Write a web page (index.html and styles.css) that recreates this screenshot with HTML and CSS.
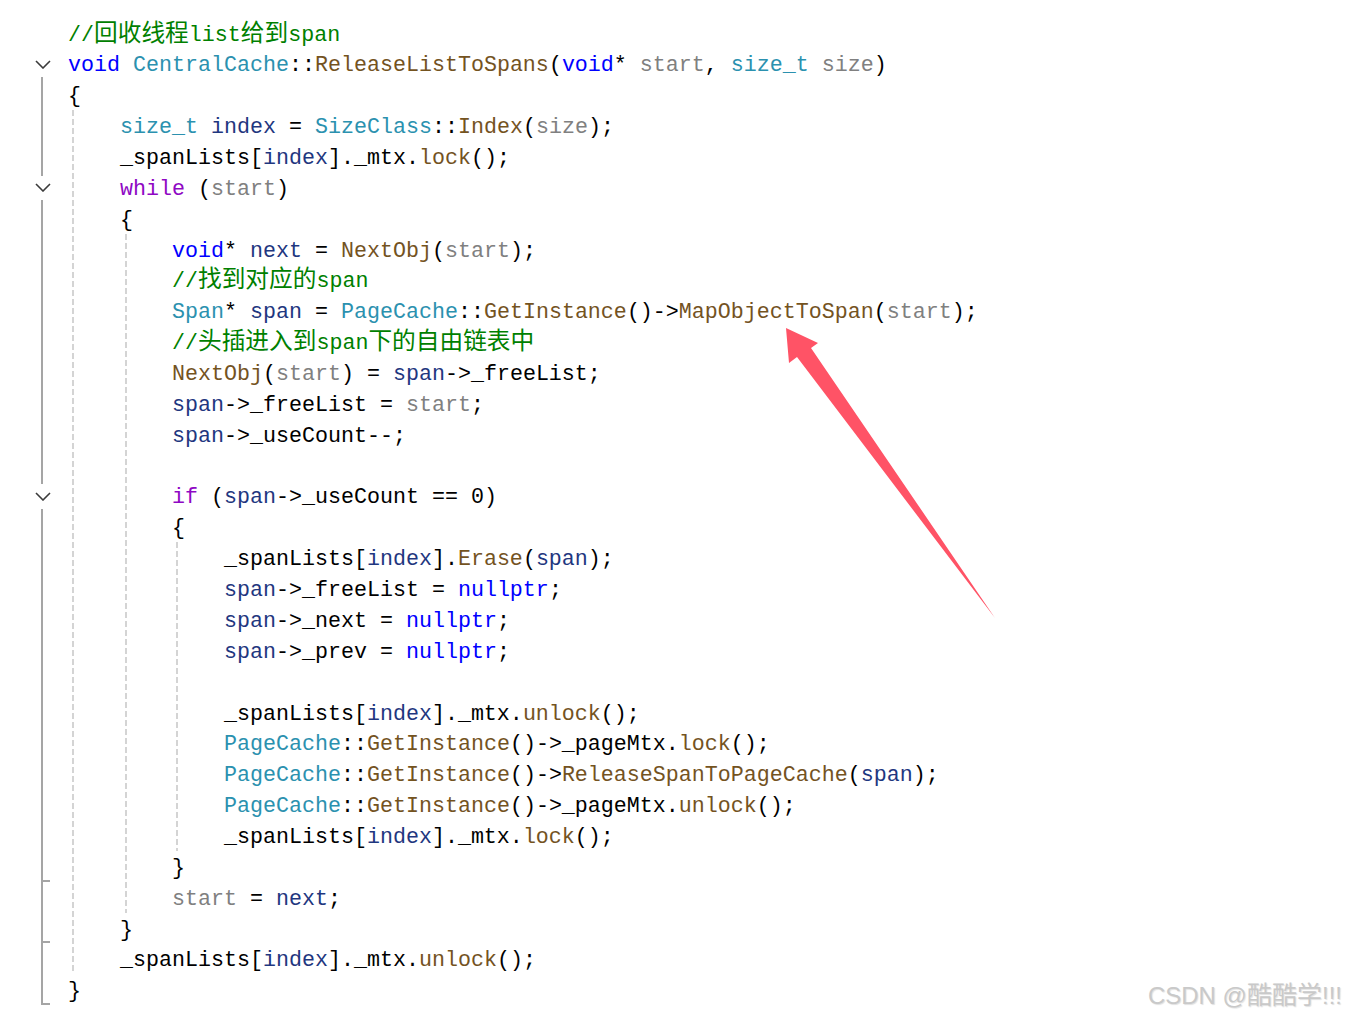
FILE: index.html
```html
<!DOCTYPE html>
<html lang="zh-CN">
<head>
<meta charset="utf-8">
<title>CentralCache::ReleaseListToSpans</title>
<link rel="stylesheet" href="styles.css">
</head>
<body>
<div class="page">
  <div class="editor">
    <div class="row"><div class="gut"></div><div class="code"><span class="m">//<span class="z">回收线程</span>list<span class="z">给到</span>span</span></div></div>
    <div class="row"><div class="gut fold first"><svg class="chev" viewBox="0 0 16 9"><polyline points="1,1 8,8 15,1"/></svg></div><div class="code"><span class="k">void</span> <span class="t">CentralCache</span>::<span class="f">ReleaseListToSpans</span>(<span class="k">void</span>* <span class="p">start</span>, <span class="t">size_t</span> <span class="p">size</span>)</div></div>
    <div class="row"><div class="gut bar"></div><div class="code">{</div></div>
    <div class="row"><div class="gut bar"></div><div class="code">    <span class="t">size_t</span> <span class="l">index</span> = <span class="t">SizeClass</span>::<span class="f">Index</span>(<span class="p">size</span>);</div></div>
    <div class="row"><div class="gut bar"></div><div class="code">    _spanLists[<span class="l">index</span>]._mtx.<span class="f">lock</span>();</div></div>
    <div class="row"><div class="gut fold"><svg class="chev" viewBox="0 0 16 9"><polyline points="1,1 8,8 15,1"/></svg></div><div class="code">    <span class="c">while</span> (<span class="p">start</span>)</div></div>
    <div class="row"><div class="gut bar"></div><div class="code">    {</div></div>
    <div class="row"><div class="gut bar"></div><div class="code">        <span class="k">void</span>* <span class="l">next</span> = <span class="f">NextObj</span>(<span class="p">start</span>);</div></div>
    <div class="row"><div class="gut bar"></div><div class="code">        <span class="m">//<span class="z">找到对应的</span>span</span></div></div>
    <div class="row"><div class="gut bar"></div><div class="code">        <span class="t">Span</span>* <span class="l">span</span> = <span class="t">PageCache</span>::<span class="f">GetInstance</span>()-&gt;<span class="f">MapObjectToSpan</span>(<span class="p">start</span>);</div></div>
    <div class="row"><div class="gut bar"></div><div class="code">        <span class="m">//<span class="z">头插进入到</span>span<span class="z">下的自由链表中</span></span></div></div>
    <div class="row"><div class="gut bar"></div><div class="code">        <span class="f">NextObj</span>(<span class="p">start</span>) = <span class="l">span</span>-&gt;_freeList;</div></div>
    <div class="row"><div class="gut bar"></div><div class="code">        <span class="l">span</span>-&gt;_freeList = <span class="p">start</span>;</div></div>
    <div class="row"><div class="gut bar"></div><div class="code">        <span class="l">span</span>-&gt;_useCount--;</div></div>
    <div class="row"><div class="gut bar"></div><div class="code"> </div></div>
    <div class="row"><div class="gut fold"><svg class="chev" viewBox="0 0 16 9"><polyline points="1,1 8,8 15,1"/></svg></div><div class="code">        <span class="c">if</span> (<span class="l">span</span>-&gt;_useCount == 0)</div></div>
    <div class="row"><div class="gut bar"></div><div class="code">        {</div></div>
    <div class="row"><div class="gut bar"></div><div class="code">            _spanLists[<span class="l">index</span>].<span class="f">Erase</span>(<span class="l">span</span>);</div></div>
    <div class="row"><div class="gut bar"></div><div class="code">            <span class="l">span</span>-&gt;_freeList = <span class="k">nullptr</span>;</div></div>
    <div class="row"><div class="gut bar"></div><div class="code">            <span class="l">span</span>-&gt;_next = <span class="k">nullptr</span>;</div></div>
    <div class="row"><div class="gut bar"></div><div class="code">            <span class="l">span</span>-&gt;_prev = <span class="k">nullptr</span>;</div></div>
    <div class="row"><div class="gut bar"></div><div class="code"> </div></div>
    <div class="row"><div class="gut bar"></div><div class="code">            _spanLists[<span class="l">index</span>]._mtx.<span class="f">unlock</span>();</div></div>
    <div class="row"><div class="gut bar"></div><div class="code">            <span class="t">PageCache</span>::<span class="f">GetInstance</span>()-&gt;_pageMtx.<span class="f">lock</span>();</div></div>
    <div class="row"><div class="gut bar"></div><div class="code">            <span class="t">PageCache</span>::<span class="f">GetInstance</span>()-&gt;<span class="f">ReleaseSpanToPageCache</span>(<span class="l">span</span>);</div></div>
    <div class="row"><div class="gut bar"></div><div class="code">            <span class="t">PageCache</span>::<span class="f">GetInstance</span>()-&gt;_pageMtx.<span class="f">unlock</span>();</div></div>
    <div class="row"><div class="gut bar"></div><div class="code">            _spanLists[<span class="l">index</span>]._mtx.<span class="f">lock</span>();</div></div>
    <div class="row"><div class="gut bar end"></div><div class="code">        }</div></div>
    <div class="row"><div class="gut bar"></div><div class="code">        <span class="p">start</span> = <span class="l">next</span>;</div></div>
    <div class="row"><div class="gut bar end"></div><div class="code">    }</div></div>
    <div class="row"><div class="gut bar"></div><div class="code">    _spanLists[<span class="l">index</span>]._mtx.<span class="f">unlock</span>();</div></div>
    <div class="row"><div class="gut bar end"></div><div class="code">}</div></div>

    <div class="guide g0"></div>
    <div class="guide g1"></div>
    <div class="guide g2"></div>
  </div>

  <svg class="arrow" viewBox="0 0 1346 1018" aria-hidden="true">
    <polygon points="786,328 818,343 811,348 995,618 797,357 789,363"/>
  </svg>

  <div class="watermark">CSDN @<span class="wz">酷酷学</span>!!!</div>
</div>
</body>
</html>
```

FILE: styles.css
```css
html, body {
  margin: 0;
  padding: 0;
  background: #ffffff;
}

.page {
  position: relative;
  width: 1346px;
  height: 1018px;
  overflow: hidden;
}

.editor {
  position: relative;
  padding-top: 17.6px;
  display: flex;
  flex-direction: column;
}

.row {
  display: flex;
  height: 30.87px;
}

.gut {
  position: relative;
  width: 68px;
  flex: 0 0 68px;
}

.gut.bar::before {
  content: "";
  position: absolute;
  left: 41px;
  top: 0;
  bottom: 0;
  width: 2px;
  background: #a5a5a5;
}

.gut.end::after {
  content: "";
  position: absolute;
  left: 41px;
  bottom: 0;
  width: 9px;
  height: 2px;
  background: #a5a5a5;
}

.gut.fold::before {
  content: "";
  position: absolute;
  left: 41px;
  top: 0;
  height: 4px;
  width: 2px;
  background: #a5a5a5;
}

.gut.fold.first::before {
  display: none;
}

.gut.fold::after {
  content: "";
  position: absolute;
  left: 41px;
  top: 28.5px;
  bottom: 0;
  width: 2px;
  background: #a5a5a5;
}

.chev {
  position: absolute;
  left: 34.5px;
  top: 11.5px;
  width: 16px;
  height: 9px;
  fill: none;
  stroke: #3b3b3b;
  stroke-width: 1.6;
}

.code {
  white-space: pre;
  padding-top: 3px;
  font-family: "Liberation Mono", "DejaVu Sans Mono", monospace;
  font-size: 21.667px;
  line-height: 30.87px;
  color: #000000;
}

.k { color: #0000ff; }
.c { color: #8f08c4; }
.t { color: #2b91af; }
.f { color: #74531f; }
.p { color: #808080; }
.l { color: #1f377f; }
.m { color: #008000; }

.z {
  font-family: "Noto Sans CJK SC", sans-serif;
  font-size: 23.7px;
  line-height: 0;
}

.guide {
  position: absolute;
  width: 2px;
  background-image: repeating-linear-gradient(to bottom, #d4d4d4 0, #d4d4d4 6px, transparent 6px, transparent 9px);
}

.g0 { left: 72px; top: 110.2px; height: 864.3px; }
.g1 { left: 125px; top: 233.7px; height: 679.1px; }
.g2 { left: 176px; top: 542.4px; height: 308.7px; }

.arrow {
  position: absolute;
  left: 0;
  top: 0;
  width: 1346px;
  height: 1018px;
  pointer-events: none;
}

.arrow polygon {
  fill: #ff5366;
}

.watermark {
  position: absolute;
  right: 4px;
  top: 982px;
  font-family: "Liberation Sans", Arial, sans-serif;
  font-size: 24px;
  line-height: 28px;
  color: #c9c9c9;
  text-shadow: 1px 1px 1px rgba(0, 0, 0, 0.12);
}

.wz {
  font-family: "Noto Sans CJK SC", sans-serif;
  font-size: 25px;
  line-height: 0;
}
```
